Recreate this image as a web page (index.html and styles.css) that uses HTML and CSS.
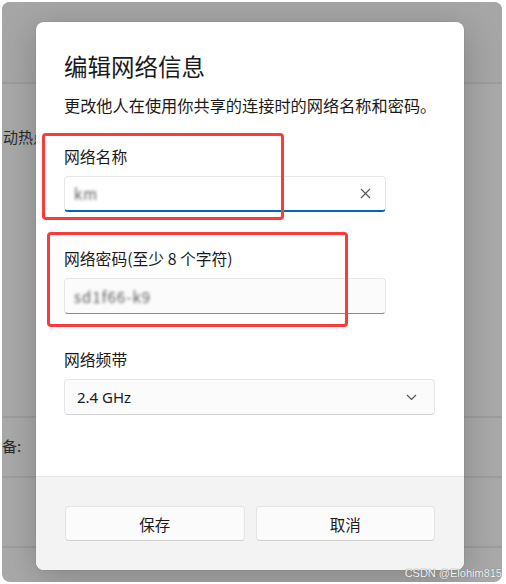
FILE: index.html
```html
<!DOCTYPE html>
<html lang="zh-CN">
<head>
<meta charset="utf-8">
<title>编辑网络信息</title>
<link rel="stylesheet" href="styles.css">
</head>
<body>
<div class="window">
  <div class="bg-row bg-top"></div>
  <div class="bg-row bg-main"><span class="bg-text bg-text-hot">动热点</span></div>
  <div class="bg-row bg-dev"><span class="bg-text bg-text-dev">备:</span></div>
  <div class="bg-row bg-mid"></div>
  <div class="bg-row bg-end"></div>

  <div class="dialog">
    <div class="dialog-body">
      <h1 class="title">编辑网络信息</h1>
      <p class="subtitle">更改他人在使用你共享的连接时的网络名称和密码。</p>

      <label class="field-label label-name">网络名称</label>
      <div class="input input-focused">
        <span class="blur-text">km</span>
        <svg class="clear-icon" width="11" height="11" viewBox="0 0 11 11"><path d="M1 1 L10 10 M10 1 L1 10" stroke="#555" stroke-width="1.1" fill="none"/></svg>
      </div>

      <label class="field-label label-pass">网络密码(至少 8 个字符)</label>
      <div class="input">
        <span class="blur-text">sd1f66-k9</span>
      </div>

      <label class="field-label label-band">网络频带</label>
      <div class="select">
        <span class="select-value">2.4 GHz</span>
        <svg class="chevron" width="11" height="7" viewBox="0 0 11 7"><path d="M1 1 L5.5 5.5 L10 1" stroke="#555" stroke-width="1.2" fill="none"/></svg>
      </div>
    </div>
    <div class="dialog-footer">
      <button class="btn">保存</button>
      <button class="btn">取消</button>
    </div>

    <div class="annot annot-1"></div>
    <div class="annot annot-2"></div>
  </div>

  <div class="watermark">CSDN @Elohim815</div>
</div>
</body>
</html>
```

FILE: styles.css
```css
* { box-sizing: border-box; }

html, body {
  margin: 0;
  padding: 0;
  background: #ffffff;
}

body {
  width: 506px;
  height: 584px;
  padding: 2px 4px 2px 2px;
  font-family: "Noto Sans CJK SC", "Noto Sans", sans-serif;
  color: #1b1b1b;
}

.window {
  position: relative;
  width: 500px;
  height: 580px;
  background: #a9a9a9;
  border-radius: 8px;
  overflow: hidden;
  display: flex;
  flex-direction: column;
}

.bg-row {
  border-bottom: 2px solid #9d9d9d;
  flex-shrink: 0;
}
.bg-top { height: 82px; background: #a6a6a6; }
.bg-main { height: 334px; padding-top: 42px; }
.bg-dev { height: 60px; padding-top: 17px; }
.bg-mid { height: 70px; }
.bg-end { flex: 1; border-bottom: none; }

.bg-text {
  display: block;
  font-size: 15px;
  line-height: 22px;
  color: #2a2a2a;
  white-space: nowrap;
}
.bg-text-hot { padding-left: 1px; }
.bg-text-dev { padding-left: 0; }

.dialog {
  position: absolute;
  left: 34px;
  top: 20px;
  width: 428px;
  height: 548px;
  background: #ffffff;
  border-radius: 8px;
  box-shadow: 0 8px 36px rgba(0, 0, 0, 0.22), 0 0 0 1px rgba(0, 0, 0, 0.04);
  display: flex;
  flex-direction: column;
  overflow: hidden;
}

.dialog-body {
  flex: 1;
  padding: 28px 29px 0 28px;
  display: flex;
  flex-direction: column;
}

.title {
  margin: 0;
  font-size: 23.5px;
  font-weight: 400;
  line-height: 32px;
  color: #1a1a1a;
}

.subtitle {
  margin: 12px 0 0;
  font-size: 16.2px;
  line-height: 22px;
  color: #1a1a1a;
  white-space: nowrap;
}

.field-label {
  display: block;
  font-size: 15.8px;
  line-height: 22px;
  color: #1a1a1a;
}
.label-name { margin-top: 30px; }
.label-pass { margin-top: 36px; }
.label-band { margin-top: 35px; }

.input {
  margin-top: 8px;
  width: 322px;
  height: 36px;
  background: #fbfbfb;
  border: 1px solid #e6e6e6;
  border-bottom: 1px solid #8c8c8c;
  border-radius: 4px;
  display: flex;
  align-items: center;
  padding: 0 12px 0 9px;
}
.input-focused {
  background: #ffffff;
  border-bottom: 2px solid #0067c0;
}

.blur-text {
  flex: 1;
  font-size: 15px;
  color: #5e5e5e;
  filter: blur(1.4px);
  letter-spacing: 1px;
}

.clear-icon { flex-shrink: 0; margin-right: 2px; }

.select {
  margin-top: 8px;
  width: 371px;
  height: 36px;
  background: #fbfbfb;
  border: 1px solid #e6e6e6;
  border-bottom-color: #d2d2d2;
  border-radius: 4px;
  display: flex;
  align-items: center;
  justify-content: space-between;
  padding: 0 17px 0 12px;
}

.select-value {
  font-family: "Noto Sans", "Noto Sans CJK SC", sans-serif;
  font-size: 15px;
  color: #1a1a1a;
}

.dialog-footer {
  height: 94px;
  flex-shrink: 0;
  background: #f3f3f3;
  border-top: 1px solid #e5e5e5;
  display: flex;
  gap: 11px;
  padding: 29px 29px 0 29px;
}

.btn {
  flex: 1;
  height: 35px;
  background: #fbfbfb;
  border: 1px solid #e4e4e4;
  border-bottom-color: #cfcfcf;
  border-radius: 4px;
  font-family: "Noto Sans CJK SC", "Noto Sans", sans-serif;
  font-size: 15.5px;
  color: #1a1a1a;
  padding: 0;
}

.annot {
  position: absolute;
  border: 3px solid #fb3a3a;
  border-radius: 4px;
}
.annot-1 { left: 6px; top: 111px; width: 242px; height: 87px; }
.annot-2 { left: 11px; top: 210px; width: 301px; height: 95px; }

.watermark {
  position: absolute;
  right: 0;
  bottom: 3px;
  font-family: "Liberation Sans", sans-serif;
  font-size: 11px;
  color: #f4f4f4;
  text-shadow: 0 0 1px #777, 0 0 1px #777;
  white-space: nowrap;
}
```
